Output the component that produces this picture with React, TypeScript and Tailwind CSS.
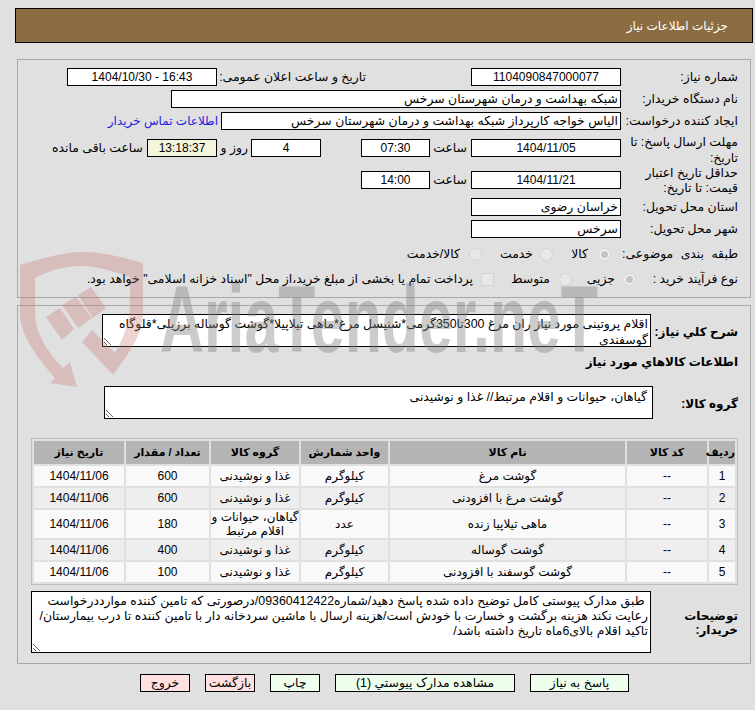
import React from "react";

const font = "[font-family:'Liberation_Sans','DejaVu_Sans',sans-serif]";

function Field({ value, w, center, ltr, bg }: { value: string; w: string; center?: boolean; ltr?: boolean; bg?: string }) {
  return (
    <input
      readOnly
      value={value}
      dir={ltr ? "ltr" : "rtl"}
      className={`${w} ${bg ?? "bg-white"} ${center ? "text-center text-[12px]" : "text-right pr-[2px] text-[12.4px]"} h-[18px] border border-black text-black shrink-0 outline-none`}
    />
  );
}

function Radio({ checked }: { checked?: boolean }) {
  return (
    <span className={`w-[13px] h-[13px] rounded-full border border-[#d2d2d2] ${checked ? "bg-[#f0f0f0]" : "bg-[#e8e8e8]"} flex items-center justify-center shrink-0`}>
      {checked && <span className="w-[7px] h-[7px] rounded-full bg-[#c4c4c4]" />}
    </span>
  );
}

const rows = [
  ["1", "--", "گوشت مرغ", "کیلوگرم", "غذا و نوشیدنی", "600", "1404/11/06"],
  ["2", "--", "گوشت مرغ با افزودنی", "کیلوگرم", "غذا و نوشیدنی", "600", "1404/11/06"],
  ["3", "--", "ماهی تیلاپیا زنده", "عدد", "گیاهان، حیوانات و اقلام مرتبط", "180", "1404/11/06"],
  ["4", "--", "گوشت گوساله", "کیلوگرم", "غذا و نوشیدنی", "400", "1404/11/06"],
  ["5", "--", "گوشت گوسفند با افزودنی", "کیلوگرم", "غذا و نوشیدنی", "100", "1404/11/06"],
];
const heads = ["رديف", "کد کالا", "نام کالا", "واحد شمارش", "گروه کالا", "تعداد / مقدار", "تاریخ نیاز"];
const widths = ["w-[26px]", "w-[80px]", "w-[235px]", "w-[87px]", "w-[88px]", "w-[83px]", "w-[90px]"];

function Btn({ label, w, bg }: { label: string; w: string; bg: string }) {
  return (
    <button className={`${w} ${bg} h-[18px] border border-black text-[12.4px] text-black flex items-center justify-center shrink-0`}>
      {label}
    </button>
  );
}

const lblBold = "text-[12px] font-bold text-black";

export default function App() {
  return (
    <div dir="rtl" className={`relative h-[710px] w-[755px] overflow-hidden bg-[#e0e0e0] pt-[8px] pl-[15px] pr-[2px] text-[12.4px] text-black ${font}`}>
      <div className="h-[35px] border border-black bg-[#8c6d42] flex items-center pr-[24px] text-[12px] text-white">
        جزئیات اطلاعات نیاز
      </div>

      <div className="mx-[2px] mt-[16px] h-[239px] border border-[#a8a8a8] pt-[8px] pr-[12px]">
        <div className="flex h-[18px] items-center">
          <div className="w-[117px] shrink-0">شماره نیاز:</div>
          <Field value="1104090847000077" w="w-[150px]" center />
          <div className="w-[105px] shrink-0" />
          <div className="w-[149px] shrink-0 whitespace-nowrap">تاریخ و ساعت اعلان عمومی:</div>
          <Field value="1404/10/30 - 16:43" w="w-[150px]" center ltr />
        </div>
        <div className="flex h-[18px] items-center mt-[4px]">
          <div className="w-[117px] shrink-0">نام دستگاه خریدار:</div>
          <Field value="شبکه بهداشت و درمان شهرستان سرخس" w="w-[450px]" />
        </div>
        <div className="flex h-[18px] items-center mt-[4px]">
          <div className="w-[117px] shrink-0 whitespace-nowrap">ایجاد کننده درخواست:</div>
          <Field value="الیاس خواجه کارپرداز شبکه بهداشت و درمان شهرستان سرخس" w="w-[400px]" />
          <a className="mr-[3px] text-[12px] text-[#2020e0] whitespace-nowrap">اطلاعات تماس خریدار</a>
        </div>
        <div className="flex h-[32px] items-start mt-[9px]">
          <div className="w-[117px] shrink-0 leading-[16px] -mt-[5px]">مهلت ارسال پاسخ: تا تاریخ:</div>
          <Field value="1404/11/05" w="w-[150px]" center />
          <div className="w-[41px] shrink-0 pr-[4px] leading-[18px]">ساعت</div>
          <Field value="07:30" w="w-[69px]" center />
          <div className="w-[40px] shrink-0" />
          <Field value="4" w="w-[70px]" center />
          <div className="w-[34px] shrink-0 pr-[3px] leading-[18px] whitespace-nowrap">روز و</div>
          <Field value="13:18:37" w="w-[70px]" center bg="bg-[#f5f5dc]" />
          <div className="pr-[4px] leading-[18px] whitespace-nowrap">ساعت باقی مانده</div>
        </div>
        <div className="flex h-[18px] items-center">
          <div className="w-[117px] shrink-0 leading-[15px] pt-[2px]">حداقل تاریخ اعتبار قیمت: تا تاریخ:</div>
          <Field value="1404/11/21" w="w-[150px]" center />
          <div className="w-[41px] shrink-0 pr-[4px]">ساعت</div>
          <Field value="14:00" w="w-[69px]" center />
        </div>
        <div className="flex h-[18px] items-center mt-[9px]">
          <div className="w-[117px] shrink-0">استان محل تحویل:</div>
          <Field value="خراسان رضوی" w="w-[150px]" />
        </div>
        <div className="flex h-[18px] items-center mt-[4px]">
          <div className="w-[117px] shrink-0">شهر محل تحویل:</div>
          <Field value="سرخس" w="w-[150px]" />
        </div>
        <div className="flex h-[18px] items-center mt-[7px]">
          <div className="w-[127px] shrink-0 whitespace-nowrap [word-spacing:4px]">طبقه بندی موضوعی:</div>
          <Radio checked />
          <div className="w-[45px] shrink-0 pr-[10px]">کالا</div>
          <Radio />
          <div className="w-[58px] shrink-0 pr-[7px]">خدمت</div>
          <Radio />
          <div className="pr-[9px]">کالا/خدمت</div>
        </div>
        <div className="flex h-[18px] items-center mt-[7px]">
          <div className="w-[102px] shrink-0 whitespace-nowrap">نوع فرآیند خرید :</div>
          <Radio checked />
          <div className="w-[51px] shrink-0 pr-[8px]">جزیی</div>
          <Radio />
          <div className="w-[65px] shrink-0 pr-[9px]">متوسط</div>
          <span className="w-[13px] h-[13px] rounded-[2px] border border-[#d2d2d2] bg-[#e8e8e8] shrink-0" />
          <div className="pr-[8px] whitespace-nowrap">پرداخت تمام یا بخشی از مبلغ خرید،از محل "اسناد خزانه اسلامی" خواهد بود.</div>
        </div>
      </div>

      <div className="mx-[2px] mt-[7px] h-[359px] border border-[#a8a8a8] pt-[8px] pr-[12px]">
        <div className="flex items-center">
          <div className={`w-[87px] shrink-0 pt-[3px] ${lblBold}`}>شرح کلي نیاز:</div>
          <textarea
            readOnly
            className="w-[549px] h-[33px] border border-black bg-white text-[12.4px] leading-[16px] px-[2px] pt-[1px] overflow-hidden outline-none"
            value="اقلام پروتینی مورد نیاز ران مرغ 300تا350گرمی*شنیسل مرغ*ماهی تیلاپیلا*گوشت گوساله برزیلی*قلوگاه گوسفندی"
          />
        </div>
        <div className={`mt-[7px] h-[16px] leading-[16px] ${lblBold}`}>اطلاعات کالاهاي مورد نياز</div>
        <div className="flex items-center mt-[16px]">
          <div className={`w-[85px] shrink-0 pt-[3px] ${lblBold}`}>گروه کالا:</div>
          <textarea
            readOnly
            className="w-[549px] h-[33px] border border-black bg-white text-[12.4px] leading-[14px] px-[5px] py-[3px] overflow-hidden outline-none"
            value="گیاهان، حیوانات و اقلام مرتبط// غذا و نوشیدنی"
          />
        </div>
        <div className="mt-[19px] w-[707px] h-[147px] border border-[#bdbdbd]">
          <table className="w-full table-fixed border-separate border-spacing-[2px] text-[12px]">
            <colgroup>
              {widths.map((w, i) => (
                <col key={i} className={w} />
              ))}
            </colgroup>
            <thead>
              <tr className="h-[23px] bg-[#b4b4b4]">
                {heads.map((h) => (
                  <th key={h} className="font-bold text-center p-0 text-[11px]">{h}</th>
                ))}
              </tr>
            </thead>
            <tbody>
              {rows.map((r, i) => (
                <tr key={i} className={`${i === 2 ? "h-[28px]" : "h-[20px]"} ${i % 2 ? "bg-[#eeeeee]" : "bg-[#f9f9f9]"}`}>
                  {r.map((c, j) => (
                    <td key={j} className="text-center p-0 leading-[14px]">{c}</td>
                  ))}
                </tr>
              ))}
            </tbody>
          </table>
        </div>
        <div className="flex items-center mt-[6px]">
          <div className={`w-[87px] shrink-0 leading-[14px] pt-[2px] ${lblBold}`}>توضیحات خریدار:</div>
          <textarea
            readOnly
            className="w-[620px] h-[62px] border border-black bg-white text-[12.4px] leading-[15px] px-[2px] py-[2px] overflow-hidden outline-none"
            value=" طبق مدارک پیوستی کامل توضیح داده شده پاسخ دهید/شماره09360412422/درصورتی که تامین کننده موارددرخواست رعایت نکند هزینه برگشت و خسارت با خودش است/هزینه ارسال با ماشین سردخانه دار با تامین کننده تا درب بیمارستان/ تاکید اقلام بالای6ماه تاریخ داشته باشد/"
          />
        </div>
      </div>

      <div className="mt-[10px] flex gap-[15px] pr-[124px]">
        <Btn label="پاسخ به نیاز" w="w-[99px]" bg="bg-[#eeffee]" />
        <Btn label="مشاهده مدارک پیوستي (1)" w="w-[180px]" bg="bg-[#eeffee]" />
        <Btn label="چاپ" w="w-[50px]" bg="bg-[#eeffee]" />
        <Btn label="بازگشت" w="w-[50px]" bg="bg-[#ffe0e0]" />
        <Btn label="خروج" w="w-[50px]" bg="bg-[#ffe0e0]" />
      </div>

      <svg className="absolute left-0 top-0 pointer-events-none" width="755" height="710" viewBox="0 0 755 710">
        <g fill="#c86e6e" fillOpacity="0.3">
          <path d="M20 265 C50 256 68 252 83 252 C105 252 125 258 143 263 L143 310 C143 335 130 352 113 375 L82 342 L92 330 L115 353 C125 335 130 320 130 305 L130 277 C110 270 95 266 82 266 C65 266 50 270 35 278 L35 313 C35 330 45 350 63 368 L70 362 L77 387 L50 383 L55 378 C30 350 20 330 20 313 Z" />
          <polygon points="46,317 60,308 74,329 62,340" />
          <polygon points="62,305 76,297 92,318 78,328" />
          <polygon points="78,295 91,287 106,308 93,318" />
        </g>
        <text x="160" y="352" textLength="438" lengthAdjust="spacingAndGlyphs" fontFamily="'Liberation Sans',sans-serif" fontWeight="700" fontSize="94" fill="#808080" fillOpacity="0.4" direction="ltr">AriaTender.neT</text>
      </svg>
    </div>
  );
}
